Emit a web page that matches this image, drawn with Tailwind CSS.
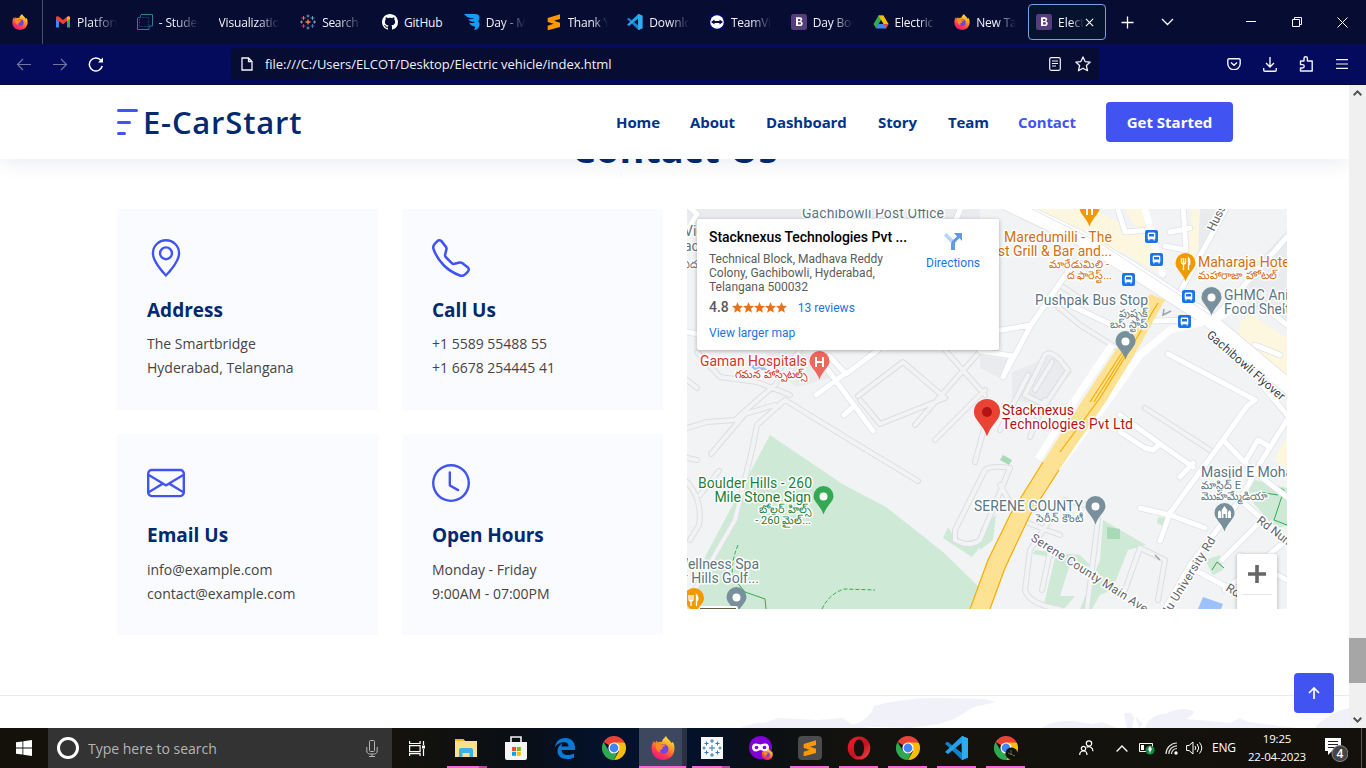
<!DOCTYPE html>
<html lang="en">
<head>
<meta charset="utf-8">
<title>E-CarStart</title>
<script src="https://cdn.jsdelivr.net/npm/@tailwindcss/browser@4"></script>
</head>
<body class="w-[1366px] h-[768px] overflow-hidden flex flex-col bg-white font-['Open_Sans','Noto_Sans',sans-serif]">

<!-- shared icon symbols -->
<svg class="absolute w-0 h-0">
  <defs>
    <linearGradient id="gFox" x1="0.8" y1="0" x2="0.3" y2="1"><stop offset="0" stop-color="#fff44f"/><stop offset=".4" stop-color="#ff9a1f"/><stop offset=".75" stop-color="#ff3750"/><stop offset="1" stop-color="#e31587"/></linearGradient>
    <linearGradient id="gOp" x1="0" y1="0" x2="1" y2="1"><stop offset="0" stop-color="#ff1b2d"/><stop offset=".55" stop-color="#c4101f"/><stop offset="1" stop-color="#ff4b4b"/></linearGradient>
    <symbol id="firefox" viewBox="0 0 24 24">
      <path d="M12 24C5 24 .5 19 .5 12.500c0-3 1-5.500 2.500-7.500l1 2 2-2.500.5 2c1.500-.8 3-1 4.500-.5C11 3 13.500 2.500 15 0c1 3 4 4 5.500 7l1.500-1c1 2 1.500 4 1.500 6.500C23.500 19 19 24 12 24z" fill="url(#gFox)"/>
      <circle cx="12.500" cy="13" r="5" fill="#7542e5"/>
      <path d="M5 8c2-1.500 4.500-.5 5.500.5h4c0 1.500-2.500 2-3 3 .5 1.500-1 3-3 2.500 0 0 .5 1.500 2 2.500-4 0-6.500-4-5.500-8.500z" fill="#ff8a24"/>
    </symbol>
    <symbol id="chrome" viewBox="0 0 24 24">
      <path d="M12 12 1.600 6A12 12 0 0 1 22.400 6z" fill="#ea4335"/>
      <path d="M12 6.500H22.700A12 12 0 0 1 12 24l5-9z" fill="#fbbc05"/>
      <path d="M1.600 6 7 15l5 2.500 3 0L12 24A12 12 0 0 1 1.600 6z" fill="#2da94f"/>
      <circle cx="12" cy="12" r="5.600" fill="#fff"/><circle cx="12" cy="12" r="4.400" fill="#4285f4"/>
    </symbol>
    <symbol id="code" viewBox="0 0 24 24">
      <path d="M17 0l6 2.500v19L17 24 2 9.500 0 8l1.500-2L3 6l14 11z" fill="#1480c8"/>
      <path d="M17 0l6 2.500v19L17 24 16.500 7 3 18l-3-2 17-16z" fill="#25a0ea"/>
      <path d="M17 0l6 2.500v19L17 24z" fill="#2cacf2"/>
    </symbol>
    <symbol id="sublime" viewBox="0 0 24 24"><path d="M2.500 6 21 .5v7L12 10.300l9 2.700v6.500L2.500 24.500v-7l9-2.800-9-2.700z" fill="#ff9800"/></symbol>
    <symbol id="bootstrap" viewBox="0 0 16 16"><rect width="16" height="16" rx="2.500" fill="#563d7c"/><path d="M5 3.300h3.800c1.500 0 2.400.8 2.400 2 0 .9-.6 1.700-1.500 1.900 1.200.1 2 1 2 2.200 0 1.700-1.200 2.600-3 2.600H5zM7 5v2h1.300c.8 0 1.200-.4 1.200-1S9 5 8.300 5zm0 3.300v2.300h1.500c.9 0 1.400-.4 1.400-1.200s-.5-1.100-1.400-1.100z" fill="#fff"/></symbol>
    <symbol id="tableau" viewBox="0 0 16 16"><path d="M8 5.500v5M5.500 8h5" stroke="#f08a3c" stroke-width="1.400"/><path d="M8 .5v3M6.500 2h3M8 12.500v3M6.500 14h3" stroke="#7c8fc0"/><path d="M3.500 2v4M1.500 4h4" stroke="#d8705d"/><path d="M12.500 2v4M10.500 4h4" stroke="#5c9cae"/><path d="M3.500 10v4M1.500 12h4" stroke="#d82f5c"/><path d="M12.500 10v4M10.500 12h4" stroke="#4b6fae"/><path d="M1.500 6.500v3M0 8h3M14.500 6.500v3M13 8h3" stroke="#8a93b8"/></symbol>
    <symbol id="pin" viewBox="0 0 20 29"><path d="M10 0a10 10 0 0 1 10 10c0 6-7 9.500-10 18.500C7 19.500 0 16 0 10A10 10 0 0 1 10 0z"/></symbol>
    <symbol id="bus" viewBox="0 0 13 13"><rect width="13" height="13" rx="2" fill="#1a73e8"/><path d="M3.500 2.500h6l.8 1v5.500H9.700v1.500H8.500V9.300h-4v1.200H3.300V9H2.700V3.500z" fill="#fff"/><path d="M4 4h5v2.500H4z" fill="#1a73e8"/></symbol>
  </defs>
</svg>

<!-- tab strip -->
<header class="h-11 shrink-0 bg-[#070c33] flex items-center text-[12px] text-[#f3f3fa] whitespace-nowrap [&_span]:mt-[2px]">
  <div class="w-[43px] h-full border-r border-[#4b4f6b] flex items-center pl-3 shrink-0"><svg class="w-4 h-4"><use href="#firefox"/></svg></div>
  <div class="w-[81.75px] pl-3 flex items-center gap-1.5 shrink-0"><svg class="w-4 h-4 shrink-0" viewBox="0 0 16 16"><path d="M1 4v9.500h3V7z" fill="#4285f4"/><path d="M15 4v9.500h-3V7z" fill="#34a853"/><path d="M1 3.500C1 2 3 1.800 4 2.700L8 6l4-3.300v4.400L8 10.300 1 5z" fill="#ea4335"/><path d="M12 2.700c1-.9 3-.7 3 1V5l-3 2.300z" fill="#fbbc04"/></svg><span class="w-10 overflow-hidden [mask-image:linear-gradient(to_right,black_40%,transparent)]">Platform</span></div>
  <div class="w-[81.75px] pl-3 flex items-center gap-1.5 shrink-0"><svg class="w-4 h-4 shrink-0" viewBox="0 0 16 16" fill="none"><path d="M4 .5h11.500V12M12 15.500H.5V4" stroke="#2d7d98"/><path d="M3.500 1v2.500H1M15.500 12H12v3.500" stroke="#2c68a0"/><path d="M2.500 3.500h9v9h-9z" stroke="#1d3d70" stroke-dasharray="2 1"/></svg><span class="w-10 overflow-hidden tracking-[-0.150px] [mask-image:linear-gradient(to_right,black_40%,transparent)]">- Student</span></div>
  <div class="w-[81.75px] pl-3 flex items-center shrink-0"><span class="w-[60px] overflow-hidden tracking-[-0.150px] [mask-image:linear-gradient(to_right,black_65%,transparent)]">Visualization</span></div>
  <div class="w-[81.75px] pl-3 flex items-center gap-1.5 shrink-0"><svg class="w-4 h-4 shrink-0"><use href="#tableau"/></svg><span class="w-10 overflow-hidden tracking-[-0.350px] [mask-image:linear-gradient(to_right,black_40%,transparent)]">Search V</span></div>
  <div class="w-[81.75px] pl-3 flex items-center gap-1.5 shrink-0"><svg class="w-4 h-4 shrink-0" viewBox="0 0 16 16" fill="#fff"><path d="M8 0C3.580 0 0 3.580 0 8c0 3.540 2.290 6.530 5.470 7.590.4.070.55-.17.55-.38 0-.19-.01-.82-.01-1.490-2.010.37-2.530-.49-2.690-.94-.09-.23-.48-.94-.82-1.130-.28-.15-.68-.52-.01-.53.63-.01 1.080.58 1.230.82.72 1.210 1.870.87 2.330.66.07-.52.28-.87.51-1.070-1.780-.2-3.640-.89-3.640-3.950 0-.87.31-1.590.82-2.150-.08-.2-.36-1.020.08-2.120 0 0 .67-.21 2.200.82.64-.18 1.320-.27 2-.27s1.360.09 2 .27c1.530-1.040 2.200-.82 2.200-.82.44 1.100.16 1.920.08 2.120.51.56.82 1.270.82 2.150 0 3.070-1.870 3.750-3.650 3.950.29.25.54.73.54 1.480 0 1.070-.01 1.930-.01 2.200 0 .21.15.46.55.38A8.010 8.010 0 0 0 16 8c0-4.420-3.580-8-8-8z"/></svg><span class="tracking-[-0.200px]">GitHub</span></div>
  <div class="w-[81.75px] pl-3 flex items-center gap-1.5 shrink-0"><svg class="w-4 h-4 shrink-0" viewBox="0 0 16 16" fill="#159cf2"><path d="M0 0h11c3 0 4.500 1.700 4.500 3.800 0 1.500-.5 2.700-1.500 3.400 1.200.8 1.800 2.100 1.600 3.600-.3 2.600-2 5.200-5.600 5.200.8-1.200 1.200-2.300 1-3.500C9 12.500 6 11 5 8.500c2.500 1 5 .5 6-.5-4 0-6-1-6.700-3C6.500 5.500 9 5 10 4.300 5 4.500 2 3 0 0z"/></svg><span class="w-10 overflow-hidden tracking-[-0.150px] [mask-image:linear-gradient(to_right,black_40%,transparent)]">Day - Ma</span></div>
  <div class="w-[81.75px] pl-3 flex items-center gap-1.5 shrink-0"><svg class="w-4 h-4 shrink-0"><use href="#sublime"/></svg><span class="w-10 overflow-hidden tracking-[-0.250px] [mask-image:linear-gradient(to_right,black_60%,transparent)]">Thank You</span></div>
  <div class="w-[81.75px] pl-3 flex items-center gap-1.5 shrink-0"><svg class="w-4 h-4 shrink-0"><use href="#code"/></svg><span class="w-10 overflow-hidden tracking-[-0.100px] [mask-image:linear-gradient(to_right,black_50%,transparent)]">Download</span></div>
  <div class="w-[81.75px] pl-3 flex items-center gap-1.5 shrink-0"><svg class="w-4 h-4 shrink-0" viewBox="0 0 16 16"><rect width="16" height="16" rx="2" fill="#040a5a"/><circle cx="8" cy="8" r="6.800" fill="#fff"/><path d="M2 8l3.500-2.500V7h5V5.500L14 8l-3.500 2.500V9h-5v1.500z" fill="#040a4a"/></svg><span class="w-10 overflow-hidden tracking-[-0.250px] [mask-image:linear-gradient(to_right,black_50%,transparent)]">TeamViewer</span></div>
  <div class="w-[81.75px] pl-3 flex items-center gap-1.5 shrink-0"><svg class="w-4 h-4 shrink-0"><use href="#bootstrap"/></svg><span class="w-10 overflow-hidden tracking-[-0.200px] [mask-image:linear-gradient(to_right,black_50%,transparent)]">Day Book</span></div>
  <div class="w-[81.75px] pl-3 flex items-center gap-1.5 shrink-0"><svg class="w-4 h-4 shrink-0" viewBox="0 0 16 16"><path d="M5.500 1.500h5L8 6 3 14.500.5 10z" fill="#34a853"/><path d="M10.500 1.500 15.500 10h-5L5.500 1.500z" fill="#fbbc04"/><path d="M3 14.500 5.500 10h10L13 14.500z" fill="#4285f4"/><path d="M15.500 10h-5l2.500 4.500z" fill="#ea4335"/></svg><span class="w-10 overflow-hidden tracking-[-0.200px] [mask-image:linear-gradient(to_right,black_60%,transparent)]">Electric</span></div>
  <div class="w-[81.75px] pl-3 flex items-center gap-1.5 shrink-0"><svg class="w-4 h-4 shrink-0"><use href="#firefox"/></svg><span class="w-10 overflow-hidden tracking-[-0.200px] [mask-image:linear-gradient(to_right,black_50%,transparent)]">New Tab</span></div>
  <div class="ml-1 w-[78px] h-9 pl-[7px] border border-[#7ba0e0] rounded bg-[#05132f] flex items-center shrink-0"><svg class="w-4 h-4 shrink-0"><use href="#bootstrap"/></svg><span class="ml-1.5 w-[26px] overflow-hidden [mask-image:linear-gradient(to_right,black_50%,transparent)]">Electric</span><svg class="w-[9px] h-[9px] ml-px" viewBox="0 0 10 10" stroke="#fff" stroke-width="1.200"><path d="M1 1l8 8M9 1l-8 8"/></svg></div>
  <svg class="w-[13px] h-[13px] ml-[15px] shrink-0" viewBox="0 0 13 13" stroke="#fff" stroke-width="1.300"><path d="M6.500 .5v12M.5 6.500h12"/></svg>
  <svg class="w-[13px] h-2 ml-[27px] shrink-0" viewBox="0 0 13 8" fill="none" stroke="#fff" stroke-width="1.300"><path d="M1 1l5.500 5.500L12 1"/></svg>
  <svg class="w-[10px] h-3 ml-[72px] shrink-0" viewBox="0 0 10 12" stroke="#fff"><path d="M0 5.500h10"/></svg>
  <svg class="w-[10px] h-[10px] ml-9 shrink-0" viewBox="0 0 10 10" fill="none" stroke="#fff"><path d="M.5 2.500h7v7h-7zM2.500 2.500v-2h7v7h-2"/></svg>
  <svg class="w-[11px] h-[11px] ml-[35px] shrink-0" viewBox="0 0 11 11" stroke="#fff"><path d="M.5 .5l10 10M10.500 .5l-10 10"/></svg>
</header>

<!-- address bar -->
<div class="h-[41px] shrink-0 bg-[#040b5c] border-b border-[#080a38] flex items-center text-[#f0f0fa]">
  <svg class="w-4 h-4 ml-4" viewBox="0 0 16 16" fill="none" stroke="#71769f" stroke-width="1.200"><path d="M15 8.500H1.500M7 3 1.500 8.500 7 14"/></svg>
  <svg class="w-4 h-4 ml-5" viewBox="0 0 16 16" fill="none" stroke="#71769f" stroke-width="1.200"><path d="M1 8.500h13.500M9 3l5.500 5.500L9 14"/></svg>
  <svg class="w-4 h-4 ml-5" viewBox="0 0 16 16" fill="none" stroke="#fff" stroke-width="1.500"><path d="M14.200 10A6.500 6.500 0 1 1 13 4.500"/><path d="M15 1.500v5h-5z" fill="#fff" stroke="none"/></svg>
  <div class="ml-[127px] w-[868px] h-8 rounded bg-[#070c33] flex items-center">
    <svg class="w-3 h-[14px] ml-[10px]" viewBox="0 0 12 14" fill="none" stroke="#f3f3fa" stroke-width="1.300"><path d="M1 1h6.500L11 4.500V13H1zM7.500 1v3.500H11"/></svg>
    <span class="ml-3 mt-[2px] text-[13px] tracking-[-0.040px] whitespace-nowrap">file:///C:/Users/ELCOT/Desktop/Electric vehicle/index.html</span>
    <svg class="w-3 h-[14px] ml-auto" viewBox="0 0 12 14" fill="none" stroke="#f3f3fa" stroke-width="1.200"><rect x=".7" y=".7" width="10.600" height="12.600" rx="1.500"/><path d="M3 4h6M3 6.500h6M3 9h4"/></svg>
    <svg class="w-4 h-4 ml-[14px] mr-2" viewBox="0 0 16 16" fill="none" stroke="#f3f3fa" stroke-width="1.300" stroke-linejoin="round"><path d="M8 .9l2.100 4.700 5.100.5-3.800 3.500 1.100 5.100L8 12.200l-4.500 2.500 1.100-5.100L.8 6.100l5.100-.5z"/></svg>
  </div>
  <svg class="w-[14px] h-3 ml-[128px]" viewBox="0 0 14 12" fill="none" stroke="#f3f3fa" stroke-width="1.400"><path d="M2 .8h10c.8 0 1.200.5 1.200 1.200v3.500a6 6 0 0 1-12.400 0V2C.8 1.300 1.200.8 2 .8zM4 4.500 7 7.300l3-2.800"/></svg>
  <svg class="w-[14px] h-[15px] ml-[22px]" viewBox="0 0 14 15" fill="none" stroke="#f3f3fa" stroke-width="1.400"><path d="M7 0v10M3 6l4 4 4-4M.7 11v2c0 .7.500 1.200 1.200 1.200h10.200c.7 0 1.200-.5 1.200-1.200v-2"/></svg>
  <svg class="w-[14px] h-[16px] ml-[22px]" viewBox="0 0 14 16" fill="none" stroke="#f3f3fa" stroke-width="1.400" stroke-linejoin="round"><path d="M5 5V2.500a1.700 1.700 0 0 1 3.400 0V5h4.800v10H1.500v-3h2a1.700 1.700 0 0 0 0-3.400h-2V5z"/></svg>
  <svg class="w-3 h-[10px] ml-[23px]" viewBox="0 0 12 10" stroke="#f3f3fa" stroke-width="1.200"><path d="M0 .6h12M0 5h12M0 9.400h12"/></svg>
</div>

<!-- page viewport -->
<div class="h-[643px] shrink-0 flex relative">
  <main class="w-[1349px] h-full flex flex-col overflow-hidden relative bg-white">
    <nav class="h-[74px] shrink-0 relative z-10 bg-white shadow-[0_2px_20px_rgba(1,41,112,0.1)] flex items-center pl-[117px] text-[#012970] font-bold">
      <svg class="w-[22px] h-[28px]" viewBox="0 0 22 28" stroke="#4154f1" stroke-width="3" stroke-linecap="round"><path d="M1.500 2.500h18M1.500 14.500h11M1.500 25.500h6"/></svg>
      <span class="ml-[4px] w-[161px] text-[29px] leading-none tracking-[0.800px] whitespace-nowrap font-semibold"><span class="text-[31px]">E-CarStart</span></span>
      <div class="ml-[312px] mt-px flex gap-[30px] text-[15px] text-[#013289] tracking-[-0.100px] whitespace-nowrap">
        <a class="w-11">Home</a><a class="w-[46px]">About</a><a class="w-[82px]">Dashboard</a><a class="w-10">Story</a><a class="w-10">Team</a><a class="w-[58px] text-[#4154f1]">Contact</a>
      </div>
      <a class="ml-[30px] w-[127px] h-10 rounded bg-[#4154f1] text-white text-[15px] flex items-center justify-center whitespace-nowrap">Get Started</a>
    </nav>
    <h2 class="h-[50px] -mt-[31px] shrink-0 text-center text-[38px] leading-[40px] font-bold text-[#012970]">Contact Us</h2>
    <div class="mt-[31px] ml-[117px] flex gap-6">
      <div class="grid grid-cols-[261px_261px] grid-rows-[201px_201px] gap-6 text-[14px] leading-6 text-[#444]">
        <section class="bg-[#fafbff] p-[30px]">
          <svg class="w-[38px] h-[38px]" viewBox="0 0 16 16" fill="#4154f1"><path d="M12.166 8.940c-.524 1.062-1.234 2.120-1.960 3.070A31.493 31.493 0 0 1 8 14.580a31.481 31.481 0 0 1-2.206-2.570c-.726-.95-1.436-2.008-1.960-3.070C3.304 7.867 3 6.862 3 6a5 5 0 0 1 10 0c0 .862-.305 1.867-.834 2.940zM8 16s6-5.686 6-10A6 6 0 0 0 2 6c0 4.314 6 10 6 10z"/><path d="M8 8a2 2 0 1 1 0-4 2 2 0 0 1 0 4zm0 1a3 3 0 1 0 0-6 3 3 0 0 0 0 6z"/></svg>
          <h3 class="mt-[21px] mb-[10px] text-[19px] font-bold leading-6 text-[#012970]">Address</h3>
          <p>The Smartbridge<br>Hyderabad, Telangana</p>
        </section>
        <section class="bg-[#fafbff] p-[30px]">
          <svg class="w-[38px] h-[38px]" viewBox="0 0 16 16" fill="#4154f1"><path d="M3.654 1.328a.678.678 0 0 0-1.015-.063L1.605 2.300c-.483.484-.661 1.169-.45 1.770a17.568 17.568 0 0 0 4.168 6.608 17.569 17.569 0 0 0 6.608 4.168c.601.211 1.286.033 1.770-.45l1.034-1.034a.678.678 0 0 0-.063-1.015l-2.307-1.794a.678.678 0 0 0-.58-.122l-2.190.547a1.745 1.745 0 0 1-1.657-.459L5.482 8.062a1.745 1.745 0 0 1-.46-1.657l.548-2.190a.678.678 0 0 0-.122-.58L3.654 1.328zM1.884.511a1.745 1.745 0 0 1 2.612.163L6.290 2.980c.329.423.445.974.315 1.494l-.547 2.190a.678.678 0 0 0 .178.643l2.457 2.457a.678.678 0 0 0 .644.178l2.189-.547a1.745 1.745 0 0 1 1.494.315l2.306 1.794c.829.645.905 1.870.163 2.611l-1.034 1.034c-.74.74-1.846 1.065-2.877.702a18.634 18.634 0 0 1-7.010-4.420 18.634 18.634 0 0 1-4.420-7.009c-.362-1.030-.037-2.137.703-2.877L1.885.511z"/></svg>
          <h3 class="mt-[21px] mb-[10px] text-[19px] font-bold leading-6 text-[#012970]">Call Us</h3>
          <p>+1 5589 55488 55<br>+1 6678 254445 41</p>
        </section>
        <section class="bg-[#fafbff] p-[30px]">
          <svg class="w-[38px] h-[38px]" viewBox="0 0 16 16" fill="#4154f1"><path d="M0 4a2 2 0 0 1 2-2h12a2 2 0 0 1 2 2v8a2 2 0 0 1-2 2H2a2 2 0 0 1-2-2V4zm2-1a1 1 0 0 0-1 1v.217l7 4.200 7-4.200V4a1 1 0 0 0-1-1H2zm13 2.383-4.758 2.855L15 11.114v-5.730zm-.034 6.878L9.271 8.820 8 9.583 6.728 8.820l-5.694 3.440A1 1 0 0 0 2 13h12a1 1 0 0 0 .966-.739zM1 11.114l4.758-2.876L1 5.383v5.730z"/></svg>
          <h3 class="mt-[21px] mb-[11px] text-[19px] font-bold leading-6 text-[#012970]">Email Us</h3>
          <p>info@example.com<br>contact@example.com</p>
        </section>
        <section class="bg-[#fafbff] p-[30px]">
          <svg class="w-[38px] h-[38px]" viewBox="0 0 16 16" fill="#4154f1"><path d="M8 3.500a.5.500 0 0 0-1 0V9a.5.500 0 0 0 .252.434l3.500 2a.5.500 0 0 0 .496-.868L8 8.710V3.500z"/><path d="M8 16A8 8 0 1 0 8 0a8 8 0 0 0 0 16zm7-8A7 7 0 1 1 1 8a7 7 0 0 1 14 0z"/></svg>
          <h3 class="mt-[21px] mb-[11px] text-[19px] font-bold leading-6 tracking-[-0.100px] text-[#012970]">Open Hours</h3>
          <p>Monday - Friday<br>9:00AM - 07:00PM</p>
        </section>
      </div>

      <!-- embedded map -->
      <div class="w-[600px] h-[400px] relative overflow-hidden font-[Roboto,sans-serif]">
        <svg class="w-[600px] h-[400px] block" viewBox="687 209 600 400">
          <defs>
            <g id="lanes" fill="none" stroke-linecap="round" stroke-linejoin="round">
              <path d="M687 428L707 422 735 420 754 403 775 385 800 350M711 454L745 414 775 405M687 458L697 460M687 482Q703 500 699 525L690 540M719 471L700 495M687 603L735 520 752 450 757 425 785 400 850 440 918 481M687 380L697 388M697 352L720 377 757 382 790 395M880 424L860 400M858 396L903 362 945 398 880 424M915 425L990 340M935 440L985 390M945 350L985 395M985 425L975 462M1120 350L1080 325 1050 300M1000 430L1028 375M1025 395L1045 355Q1050 350 1060 360L1068 370 1045 405zM1035 390L1052 362M1030 437L1045 400M955 530L985 470Q990 465 1010 468L980 540Q970 548 955 540zM1000 485L1020 520 1060 535M1087 609L1098 520Q1097 510 1085 505L1065 500 1050 520 1030 550 1025 590Q1030 605 1060 609M1050 552L1042 590M1145 408L1210 450M1125 590L1140 548 1165 560 1158 600M1060 285L1082 300"/>
            </g>
            <g id="roads" fill="none" stroke-linecap="round" stroke-linejoin="round">
              <path d="M687 332L735 341M829 356L846 374 878 350M846 373L816 395M822 362L873 431M844 415L852 408M690 226L697 214 687 205M910 209L925 225M962 205L955 222M980 351L1012 356 1003 377 1031 325 1055 290 1075 262M1055 298L1112 325M1031 325L990 332M1145 209L1163 275M1118 209L1125 232 1148 230M1183 205L1186 250 1165 246M1170 232L1190 228M1228 205L1180 292M1287 237L1240 290 1218 314 1200 320 1150 321 1138 318M1168 354L1208 375 1255 400 1247 406 1223 440 1170 513 1160 541M1120 415L1160 444 1193 467M1120 432L1145 448 1153 450 1160 444M1193 463L1180 477M1140 508L1170 515 1205 528M1287 420L1262 460 1240 500 1190 565 1165 609M1223 440L1252 470 1287 497M1245 462L1258 440 1268 446M1262 385L1287 415M1240 500L1287 540M1195 570L1240 594 1260 600M1222 560L1262 520M1240 555L1287 580M1287 540L1225 590M1268 310L1287 325M1255 345L1280 355"/>
            </g>
          </defs>
          <rect x="687" y="209" width="600" height="400" fill="#f1f3f4"/>
          <g fill="#e9ebee">
            <path d="M687 209h120v12H687zM860 209h120v20H860zM980 355l30 5-10 18-20-10zM1195 209h30l-25 50zM1250 270l37-40v90l-40-10zM1012 372l45-18 15 18-30 36-30-10zM765 352l45 0 25 25-40 10z"/>
          </g>
          <g fill="#fef7e0">
            <path d="M1022 209h70l50 25 18 40-35-20zM1125 209h18l16 60zM1192 209h8l-2 40-15 30-5-25 10-8zM1240 322l10-8 37 24v38l-48-34zM1274 460l13-22v30z"/>
          </g>
          <g fill="#ceead6">
            <path d="M770 435L844 485 886 507 943 552 979 587 970 609H687V603L706 555z"/>
            <path d="M948 527L958 543 985 537 990 520 996 515 990 535 972 557 943 538zM980 530l16-15-3 25-13 10zM1103 520L1146 545 1128 550 1112 590 1100 595 1092 609H1080L1100 560zM1035 550l45 5 12 12-22-3-10 32h15l-10 12h-22l12-50-22-4zM1255 480l32 8v38l-12 2-30-35zM1205 560l15-5 3 15-10 5zM1158 517l7 1-2 8-6-3z"/>
          </g>
          <path d="M1107 527l13 2v10h-13zM1003 455l9 5-3 5-9-5z" fill="#a8dab5"/>
          <path d="M738 545q-8 20-5 32M822 609q7-15 22-20l31 1" fill="none" stroke="#34a853" stroke-dasharray="4 2"/>
          <path d="M735 580l10 12 20 7 1 10M1262 480l22 10-10 30 13 5M1258 492l20 3M1212 570l5-8 7 6" fill="none" stroke="#34a853"/>
          <path d="M1198 609l5-12 20 7-2 5zM748 365l14 0 5 5-12 0z" fill="#9ec0fb"/>
          <use href="#lanes" stroke="#dcdee1" stroke-width="6"/>
          <use href="#lanes" stroke="#f1f3f4" stroke-width="4"/>
          <use href="#roads" stroke="#dfe1e5" stroke-width="6.500"/>
          <use href="#roads" stroke="#fff" stroke-width="5"/>
          <g fill="none">
            <path d="M1005 202L1080 238 1130 268 1207 318 1295 392" stroke="#dfe1e5" stroke-width="16"/>
            <path d="M1005 202L1080 238 1130 268 1207 318 1295 392" stroke="#fff" stroke-width="14.500"/>
            <path d="M1010 198L1100 243 1215 318" stroke="#e2e4e8"/>
            <path d="M1144 205L1163 275M1060 465L1110 398 1140 355 1170 330 1215 319 1240 305M1038 459L1075 400 1112 345" stroke="#fff" stroke-width="7"/>
          </g>
          <path d="M1150 294L1119 345 1080 404 1043 462 1010 515 988 560 970 609H990L1005 568 1030 515 1059 470 1107 400 1140 345 1165 300z" fill="#fde293"/>
          <path d="M1043 462L1010 515 988 560 970 609M990 609L1005 568 1030 515 1059 470M1158 303L1100 398 1060 452M1127 345L1090 402M1130 345L1094 402" fill="none" stroke="#f9ab00" stroke-width="1.200"/>
          <path d="M1169 312l-6 3 1-6M1163 315l8-4M1155 555l5 5" stroke="#9aa5ab" stroke-width="1.500" fill="none"/>

          <!-- markers -->
          <use href="#pin" x="1079" y="198" width="21" height="29" fill="#f29900"/>
          <path d="M1087 206v9M1092 206v9" stroke="#fff" stroke-width="2"/>
          <use href="#pin" x="1175" y="253" width="21" height="29" fill="#f29900"/>
          <path d="M1181.500 258v4q0 2 2 2t2-2v-4M1183.500 258v12M1188.500 270v-12q2 2 1 7" stroke="#fff" stroke-width="1.300" fill="none"/>
          <g fill="#78909c"><use href="#pin" x="1201" y="287" width="21" height="29"/><use href="#pin" x="1115" y="331" width="21" height="29"/><use href="#pin" x="1085" y="496" width="21" height="29"/><use href="#pin" x="1214" y="503" width="21" height="29"/><use href="#pin" x="726" y="587" width="21" height="29"/></g>
          <g fill="#fff"><circle cx="1211.500" cy="297.500" r="4"/><circle cx="1125.500" cy="341.500" r="4"/><circle cx="1095.500" cy="506.500" r="4"/><circle cx="736.500" cy="597.500" r="4"/><path d="M1218 518v-6l1.500-2 1.500 2v6zM1228 518v-6l1.500-2 1.500 2v6zM1221.700 518v-8l2.800-4 2.800 4v8h-1.800v-4h-2v4z"/></g>
          <use href="#pin" x="809" y="351" width="21" height="29" fill="#ee675c"/>
          <path d="M816 357v10M823 357v10M816 362h7" stroke="#fff" stroke-width="2"/>
          <use href="#pin" x="813" y="486" width="21" height="29" fill="#34a853"/><circle cx="823.500" cy="496.500" r="4" fill="#fff"/>
          <use href="#pin" x="684" y="588" width="20" height="29" fill="#f29900"/>
          <path d="M689 595v4q0 2 2 2t2-2v-4M691 595v11M696.500 606v-11q2 2 1 6" stroke="#fff" stroke-width="1.300" fill="none"/>
          <use href="#pin" x="973.500" y="399" width="27" height="38" fill="#ea4335"/><circle cx="987" cy="412" r="5" fill="#b31412"/>
          <use href="#bus" x="1145" y="230" width="13" height="13"/><use href="#bus" x="1150" y="253" width="13" height="13"/><use href="#bus" x="1122" y="273" width="13" height="13"/><use href="#bus" x="1182" y="290" width="13" height="13"/><use href="#bus" x="1178" y="315" width="13" height="13"/>

          <!-- labels -->
          <g font-size="14" stroke="#fff" stroke-width="3" stroke-linejoin="round" paint-order="stroke">
            <g fill="#5b7583">
              <text x="802" y="218" textLength="142">Gachibowli Post Office</text>
              <text x="684" y="236">Vic</text><text x="684" y="251">ac</text><text x="682" y="268" font-size="11">విద</text>
              <text x="1035" y="305" textLength="113">Pushpak Bus Stop</text>
              <text x="1148" y="317" font-size="11" text-anchor="end">పుష్పక్</text><text x="1148" y="328" font-size="11" text-anchor="end">బస్ స్టాప్</text>
              <text x="1224" y="300" textLength="88">GHMC Animal</text><text x="1224" y="314" textLength="78">Food Shelter</text>
              <text x="974" y="511" textLength="109">SERENE COUNTY</text><text x="1083" y="522" font-size="11" text-anchor="end">సెరీన్ కౌంటీ</text>
              <text x="1201" y="477">Masjid E Mohammedia</text><text x="1201" y="489" font-size="11">మాస్జిద్ E</text><text x="1201" y="500" font-size="11">మొహమ్మేడియా</text>
              <text x="759" y="569" text-anchor="end">Wellness Spa</text><text x="759" y="583" text-anchor="end">Boulder Hills Golf...</text>
            </g>
            <g fill="#d56e0c">
              <text x="1004" y="242" textLength="108">Maredumilli - The</text><text x="1112" y="256" text-anchor="end">Forest Grill &amp; Bar and...</text>
              <text x="1109" y="268" font-size="11" text-anchor="end">మారేడుమిలి -</text><text x="1112" y="279" font-size="11" text-anchor="end">ద ఫారెస్ట్...</text>
              <text x="1198" y="267">Maharaja Hotel</text><text x="1198" y="279" font-size="11">మహారాజా హోటల్</text>
            </g>
            <g fill="#d93025"><text x="700" y="366" textLength="107">Gaman Hospitals</text><text x="807" y="378" font-size="11" text-anchor="end">గమన హాస్పిటల్స్</text></g>
            <g fill="#b31412"><text x="1002" y="415">Stacknexus</text><text x="1002" y="429" textLength="131">Technologies Pvt Ltd</text></g>
            <g fill="#188038"><text x="698" y="488" textLength="114">Boulder Hills - 260</text><text x="811" y="502" text-anchor="end">Mile Stone Sign</text><text x="811" y="513" font-size="11" text-anchor="end">బోల్డర్ హిల్స్</text><text x="811" y="524" font-size="11" text-anchor="end">- 260 మైల్...</text></g>
            <g fill="#5f6368" font-size="12">
              <text transform="translate(1214 232) rotate(-64)">Hussain</text>
              <text transform="translate(1206 336) rotate(41)" textLength="99" fill="#3c4043">Gachibowli Flyover</text>
              <text transform="translate(1030 540) rotate(32.500)" textLength="136">Serene County Main Ave</text>
              <text transform="translate(1164 623) rotate(-58)" textLength="98">Edu University Rd</text>
              <text transform="translate(1256 522) rotate(37)">Rd Number</text>
              <text transform="translate(1225 590) rotate(32)">Rd</text>
            </g>
          </g>
          <path d="M699 609v-1.500q0-1.500 2-1.500h35q2 0 2 3z" fill="#fff"/><path d="M700 608h36v1h-36z" fill="#6b5c4a"/>
        </svg>
        <!-- place card -->
        <div class="absolute left-[10px] top-[10px] w-[302px] h-[131px] bg-white rounded-[2px] shadow-[0_1px_4px_rgba(0,0,0,0.3)] flex pl-3 pt-[9px] text-[12px]">
          <div class="w-[212px] whitespace-nowrap">
            <div class="text-[14px] leading-[19px] font-medium text-black tracking-[-0.030px]">Stacknexus Technologies Pvt ...</div>
            <div class="mt-[5px] leading-[14px] text-[#5b5b5b]">Technical Block, Madhava Reddy<br>Colony, Gachibowli, Hyderabad,<br>Telangana 500032</div>
            <div class="mt-[3px] h-5 flex items-center leading-5"><span class="text-[14px] font-medium text-[#5b5b5b]">4.8</span>
              <svg class="w-[55px] h-[11px] ml-[3px]" viewBox="0 0 55 11" fill="#e7711b"><path id="st" d="M5.500 0l1.500 3.700 4 .3-3 2.700.9 4L5.500 8.600 2.100 10.700 3 6.700 0 4l4-.3z"/><use href="#st" x="11"/><use href="#st" x="22"/><use href="#st" x="33"/><use href="#st" x="44"/></svg>
              <span class="ml-[11px] mt-px text-[#1a73e8]">13 reviews</span></div>
            <div class="mt-[6px] leading-5 text-[#1a73e8]">View larger map</div>
          </div>
          <div class="w-[64px] flex flex-col items-center pt-1">
            <svg class="w-5 h-[19px]" viewBox="0 0 20 19"><path d="M1 3.500 3.500 1 10 7.500l1 3V18H8v-7z" fill="#b8d3f8"/><path d="M8 18v-5q0-3 2-5l4-3.500L11 1h8v8l-2.500-3L13 9.500q-1 1-1 3V18z" fill="#5e9ae8"/></svg>
            <span class="mt-1 text-[#1a73e8] leading-4">Directions</span>
          </div>
        </div>
        <!-- zoom control -->
        <div class="absolute left-[550px] top-[345px] w-10 h-[60px] bg-white rounded-[2px] shadow-[0_1px_4px_rgba(0,0,0,0.3)] flex flex-col items-center pt-[11px]">
          <svg class="w-[18px] h-[18px]" viewBox="0 0 18 18" fill="#666"><path d="M7.200 0h3.600v7.200H18v3.600h-7.200V18H7.200v-7.200H0V7.200h7.200z"/></svg>
          <div class="mt-[11px] w-[30px] h-px bg-[#e6e6e6]"></div>
        </div>
      </div>
    </div>
    <!-- footer top edge with world map silhouette -->
    <div class="mt-[60px] h-[33px] shrink-0 border-t border-[#e1ecff]">
      <svg class="w-full h-8 block" viewBox="0 0 1349 32" fill="#f0f1f9"><path d="M740 32q15-6 24-5l14-5 40 2 25-2 8 6 20 4zM850 30q20-6 24-20 30-8 60-8l50 1 12 3-22 5-20 12-15 5-30 4zM1042 32q10-8 30-7l20 3 10-2 15 6zM1124 18q8-4 10 4l-2 10h-5zM1135 20l8 8-4 4zM1145 32q5-14 20-14 15-7 25-4 10 1-4 9l25 2 20 2 8-5 10 4 30 4 20 2zM1316 30q15-14 33-18v20h-33z"/></svg>
    </div>
    <a class="absolute left-[1294px] top-[588px] w-10 h-10 rounded bg-[#4154f1] flex items-center justify-center"><svg class="w-3 h-3" viewBox="0 0 12 12" fill="none" stroke="#fff" stroke-width="1.700"><path d="M6 12V1M1 6l5-5 5 5"/></svg></a>
  </main>
  <!-- scrollbar -->
  <div class="w-[17px] h-full bg-[#f0f0f0] flex flex-col items-center">
    <svg class="w-[9px] h-[6px] mt-[5px]" viewBox="0 0 9 6" fill="none" stroke="#505050" stroke-width="2"><path d="M.7 5.200 4.500 1.400l3.800 3.800"/></svg>
    <div class="mt-[542px] w-full h-[45px] bg-[#a6a6a6]"></div>
    <svg class="w-[9px] h-[6px] mt-auto mb-[5px]" viewBox="0 0 9 6" fill="none" stroke="#505050" stroke-width="2"><path d="M.7 .8l3.800 3.800L8.300 .8"/></svg>
  </div>
</div>

<!-- taskbar -->
<footer class="h-10 shrink-0 flex items-center text-white text-[12px] bg-[linear-gradient(to_right,#14110a_0,#14120b_400px,#0a0f16_520px,#03112a_600px,#03112a_690px,#0b1015_760px,#13120e_850px,#14110c)]">
  <div class="w-12 flex justify-center shrink-0"><svg class="w-4 h-4" viewBox="0 0 16 16" fill="#fff"><path d="M0 2.300 6.500 1.400V7.600H0zM7.300 1.300 16 0v7.600H7.300zM0 8.400h6.500v6.200L0 13.700zM7.300 8.400H16V16l-8.700-1.300z"/></svg></div>
  <div class="w-[344px] h-10 bg-[#333] flex items-center pl-[9px] text-[#b5b5b5] shrink-0">
    <div class="w-[22px] h-[22px] rounded-full border-[3px] border-white"></div>
    <span class="ml-[9px] mt-px text-[14px] whitespace-nowrap">Type here to search</span>
    <svg class="w-3 h-[17px] ml-auto mr-[14px]" viewBox="0 0 12 17" fill="none" stroke="#b5b5b5"><rect x="3.500" y=".5" width="5" height="11" rx="1"/><path d="M.8 7v4c0 2 1.500 3 3 3h4.400c1.500 0 3-1 3-3V7M6 14v2.500M3 16.500h6"/></svg>
  </div>
  <div class="w-[49px] h-10 flex items-center justify-center shrink-0"><svg class="w-4 h-[15px]" viewBox="0 0 16 15" fill="none" stroke="#fff" stroke-width="1.200"><path d="M.6 0v2.500h10.500V0M.6 4.600h10.500v6H.6zM.6 15v-2.300h10.500V15M14.500 0v4M14.500 8v7"/><path d="M13 4.500h3v3h-3z" fill="#fff" stroke="none"/></svg></div>
  <div class="w-[50px] h-10 flex items-center justify-center relative shrink-0"><svg class="w-[22px] h-5" viewBox="0 0 22 20"><path d="M0 1h8l2 2h12v16H0z" fill="#ffe08a"/><path d="M0 1h8l2 2H0z" fill="#f5b81c"/><path d="M4 19v-7q0-2 2-2h10q2 0 2 2v7h-3.500v-4h-7v4z" fill="#35b3ea"/></svg><i class="absolute bottom-0 left-[6px] w-8 h-0.5 bg-[#f06ad8]"></i><i class="absolute bottom-0 left-[38px] w-2 h-0.5 bg-[#b04f9f]"></i></div>
  <div class="w-[49px] h-10 flex items-center justify-center shrink-0"><svg class="w-[22px] h-6" viewBox="0 0 22 24"><path d="M6 6V1h10v5" fill="none" stroke="#f0f0f0" stroke-width="1.600"/><path d="M0 6h22v16q0 2-2 2H2q-2 0-2-2z" fill="#f5f5f5"/><path d="M7 11h4v4H7z" fill="#f25022"/><path d="M11.800 11h4v4h-4z" fill="#7fba00"/><path d="M7 15.800h4v4H7z" fill="#00a4ef"/><path d="M11.800 15.800h4v4h-4z" fill="#ffb900"/></svg></div>
  <div class="w-[49px] h-10 flex items-center justify-center shrink-0"><svg class="w-5 h-[21px]" viewBox="0 0 20 21"><path d="M0 9C1 3 5 0 10.500 0 16 0 20 4 20 9.500V12H6.500c0 3 2.500 5 6.500 5 2.500 0 4.500-.6 6-1.500v4C17 20.500 14.500 21 12 21 6 21 2.500 17.500 2.500 13c0-3.500 2-6 5-7.500C6.800 6.500 6.500 7.500 6.500 8.500h7c0-2.800-1.500-4.200-4.500-4.200C5 4.300 2 6 0 9z" fill="#0a7ad8"/></svg></div>
  <div class="w-[49px] h-10 flex items-center justify-center shrink-0"><svg class="w-6 h-6"><use href="#chrome"/></svg></div>
  <div class="ml-px w-[48px] h-10 flex items-center justify-center relative bg-[linear-gradient(to_right,#3d4760_43px,#2a3142_43px)] shrink-0"><svg class="w-6 h-6 -mt-px"><use href="#firefox"/></svg><i class="absolute bottom-0 left-0 w-[47px] h-0.5 bg-[#f06ad8]"></i></div>
  <div class="w-[49px] h-10 flex items-center justify-center relative shrink-0"><svg class="w-[22px] h-[22px]" viewBox="0 0 22 22"><path d="M0 0h22v22H0z" fill="#f6f8fa"/><path d="M11 8v6M8 11h6M11 2v4M9 4h4M11 16v4M9 18h4M5.500 4.500v4M3.500 6.500h4M16.500 4.500v4M14.500 6.500h4M5.500 13.500v4M3.500 15.500h4M16.500 13.500v4M14.500 15.500h4M3 9.500v3M1.500 11h3M19 9.500v3M17.500 11h3" stroke="#3c78a8"/></svg><i class="absolute bottom-0 left-[5px] w-[30px] h-0.5 bg-[#f06ad8]"></i><i class="absolute bottom-0 left-[35px] w-2 h-0.5 bg-[#b04f9f]"></i></div>
  <div class="w-[49px] h-10 flex items-center justify-center shrink-0"><svg class="w-6 h-6" viewBox="0 0 24 24"><circle cx="11.500" cy="11.500" r="11.500" fill="#8000d7"/><path d="M7 7.500c2 0 3.500 1 4.500 1s2.500-1 4.500-1c3 0 4 2 4 4s-1.500 4-4 4c-2 0-3-1.500-4.500-1.500S9 15.500 7 15.500c-2.500 0-4-2-4-4s1-4 4-4z" fill="#fff"/><circle cx="7.500" cy="11.500" r="1.800" fill="#8000d7"/><circle cx="15.500" cy="11.500" r="1.800" fill="#8000d7"/><use href="#firefox" x="12.500" y="12.500" width="11.500" height="11.500"/></svg></div>
  <div class="w-[49px] h-10 flex items-center justify-center relative shrink-0"><div class="w-6 h-6 rounded-sm bg-[#4b4b4b] flex items-center justify-center"><svg class="w-[16px] h-[16px]"><use href="#sublime"/></svg></div><i class="absolute bottom-0 left-[5px] w-[39px] h-0.5 bg-[#f06ad8]"></i></div>
  <div class="w-[49px] h-10 flex items-center justify-center relative shrink-0"><svg class="w-6 h-6" viewBox="0 0 24 24"><path fill-rule="evenodd" d="M12 .5a11.300 11.500 0 1 0 0 23 11.300 11.500 0 0 0 0-23zM12 3.500c3 0 5 3.500 5 8.500s-2 8.500-5 8.500-5-3.500-5-8.500 2-8.500 5-8.500z" fill="url(#gOp)"/></svg><i class="absolute bottom-0 left-[5px] w-[39px] h-0.5 bg-[#f06ad8]"></i></div>
  <div class="w-[49px] h-10 flex items-center justify-center relative shrink-0"><svg class="w-6 h-6"><use href="#chrome"/></svg><i class="absolute bottom-0 left-[5px] w-[39px] h-0.5 bg-[#f06ad8]"></i></div>
  <div class="w-[49px] h-10 flex items-center justify-center relative shrink-0"><svg class="w-6 h-6"><use href="#code"/></svg><i class="absolute bottom-0 left-[5px] w-[39px] h-0.5 bg-[#f06ad8]"></i></div>
  <div class="w-[49px] h-10 flex items-center justify-center relative shrink-0"><svg class="w-6 h-6" viewBox="0 0 24 24"><use href="#chrome"/><circle cx="17.500" cy="17.500" r="6" fill="#11120f"/><path d="M14 17l7 3M17 14v5" stroke="#6d6a40"/></svg><i class="absolute bottom-0 left-[5px] w-[39px] h-0.5 bg-[#f06ad8]"></i></div>
  <svg class="w-[15px] h-4 ml-[49px] shrink-0" viewBox="0 0 15 16" fill="none" stroke="#fff" stroke-width="1.200"><circle cx="10" cy="3.500" r="2.700"/><circle cx="4.500" cy="8.500" r="2.200"/><path d="M.7 15c0-2.500 1.500-4 3.800-4s3.500 1.500 3.500 4M7.500 7.300c3-1.500 6.500 0 6.500 4"/></svg>
  <svg class="w-3 h-[7px] ml-[22px] shrink-0" viewBox="0 0 12 7" fill="none" stroke="#fff" stroke-width="1.300"><path d="M.6 6.500 6 1l5.400 5.500"/></svg>
  <svg class="w-4 h-[14px] ml-[11px] shrink-0" viewBox="0 0 16 14"><path d="M.5 2.500h13v8H.5z" fill="none" stroke="#fff"/><path d="M2 4h3v5H2z" fill="#fff"/><circle cx="11" cy="9" r="4.600" fill="#10893e"/><path d="M11 5.500q3 3 0 5-3-2 0-5zM11 10v2.500" fill="#fff" stroke="#fff" stroke-width=".6"/></svg>
  <svg class="w-[13px] h-[13px] ml-[10px] shrink-0" viewBox="0 0 13 13" fill="none" stroke="#ddd" stroke-width="1.200"><path d="M1 12A11 11 0 0 1 12 1M3.800 12A8.200 8.200 0 0 1 12 3.800M6.500 12A5.500 5.500 0 0 1 12 6.500"/><circle cx="11" cy="11" r="1.700" fill="#fff" stroke="none"/></svg>
  <svg class="w-[17px] h-[14px] ml-2 shrink-0" viewBox="0 0 17 14" fill="none" stroke="#fff"><path d="M.6 4.500h2.500L7 1v12L3.100 9.500H.6zM9 5q1.500 2 0 4M11.200 3q3 4 0 8M13.500 1.500q4.500 5.500 0 11"/></svg>
  <span class="ml-[9px] w-6 text-[12px] tracking-[-0.200px] shrink-0">ENG</span>
  <div class="ml-2 w-[66px] h-10 flex flex-col items-center pt-0.5 text-[11.500px] leading-[18px] tracking-[-0.200px] whitespace-nowrap shrink-0"><span>19:25</span><span>22-04-2023</span></div>
  <svg class="w-6 h-6 ml-[14px] mt-1 shrink-0" viewBox="0 0 24 24"><path d="M1 0h16v13H8l-4 4v-4H1z" fill="#fff"/><path d="M4 3.500h10M4 6.500h10M4 9.500h7" stroke="#222"/><circle cx="16" cy="15.500" r="8" fill="#444" stroke="#888"/><text x="16" y="20" text-anchor="middle" fill="#fff" font-size="12" font-weight="600">4</text></svg>
  <i class="ml-auto mr-1 w-px h-10 bg-[#555]"></i>
</footer>
</body>
</html>
